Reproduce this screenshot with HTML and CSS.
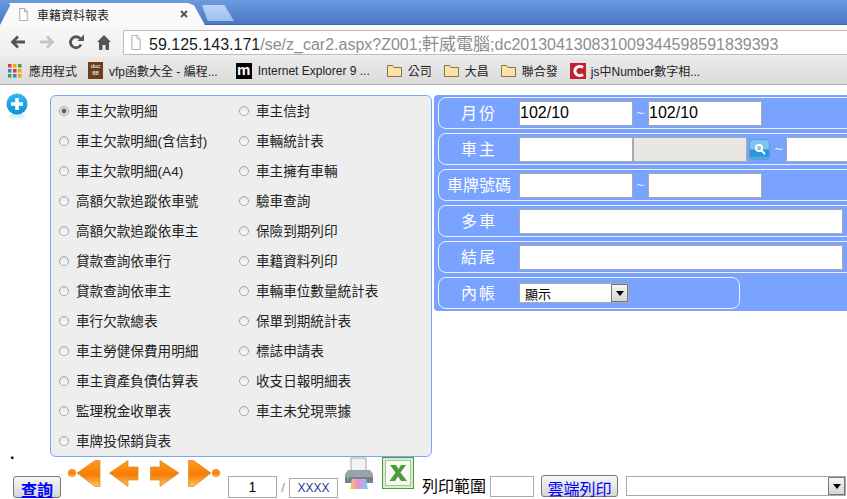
FILE: index.html
```html
<!doctype html>
<html lang="zh-Hant">
<head>
  <meta charset="utf-8" />
  <meta name="viewport" content="width=device-width,initial-scale=1" />
  <title>車籍資料報表</title>
  <link rel="stylesheet" href="styles.css">
</head>
<body>
  <!-- Browser frame -->
  <div class="tabStrip">
    <div class="tab">
      <svg class="favPage" width="9" height="13" viewBox="0 0 12 14" preserveAspectRatio="none"><path d="M1 .5h6.500L11 4v9.500H1z" fill="#fff" stroke="#999"/><path d="M7.500.5V4H11" fill="#eee" stroke="#999"/></svg>
      <span class="tabTitle">車籍資料報表</span>
      <svg class="tabClose" width="8" height="8" viewBox="0 0 8 8"><path d="M1 1l6 6M7 1L1 7" stroke="#555" stroke-width="2"/></svg>
    </div>
    <div class="newTab"></div>
  </div>

  <div class="toolbar">
    <svg class="navIcon" width="16" height="14" viewBox="0 0 16 14"><path d="M15 7H4M8 1.500L2.500 7 8 12.500" fill="none" stroke="#555" stroke-width="2.800"/></svg>
    <svg class="navIcon" width="16" height="14" viewBox="0 0 16 14"><path d="M1 7h11M8 1.500L13.500 7 8 12.500" fill="none" stroke="#c4c4c4" stroke-width="2.800"/></svg>
    <svg class="navIcon" width="16" height="16" viewBox="0 0 16 16"><path d="M13 10.500A5.500 5.500 0 1 1 12 4.500" fill="none" stroke="#555" stroke-width="2.800"/><path d="M9.500 7H16V0.500z" fill="#555"/></svg>
    <svg class="navIcon" width="14" height="15" viewBox="0 0 14 15"><path d="M7 0L0 7h2v8h3.500v-5h3v5H12V7h2z" fill="#555"/></svg>
    <div class="addressBar">
      <svg width="10" height="15" viewBox="0 0 12 15" preserveAspectRatio="none"><path d="M1 .5h6.500L11 4v10.500H1z" fill="#fff" stroke="#aaa"/><path d="M7.500.5V4H11" fill="#eee" stroke="#aaa"/></svg>
      <span class="url"><b>59.125.143.171</b>/se/z_car2.aspx?Z001;<span class="urlCjk">軒威電腦</span>;dc201304130831009344598591839393</span>
    </div>
  </div>

  <div class="bookmarks">
    <a class="mark markApps">
      <svg width="14" height="14" viewBox="0 0 14 14">
        <rect width="3.500" height="3.500" fill="#e33"/><rect x="5" width="3.500" height="3.500" fill="#f5a300"/><rect x="10" width="3.500" height="3.500" fill="#3a3"/>
        <rect y="5" width="3.500" height="3.500" fill="#38d"/><rect x="5" y="5" width="3.500" height="3.500" fill="#e33"/><rect x="10" y="5" width="3.500" height="3.500" fill="#f5a300"/>
        <rect y="10" width="3.500" height="3.500" fill="#3a3"/><rect x="5" y="10" width="3.500" height="3.500" fill="#38d"/><rect x="10" y="10" width="3.500" height="3.500" fill="#f5a300"/>
      </svg>應用程式</a>
    <a class="mark markDoc"><span class="docIcon">doc<br>88</span>vfp函數大全 - 編程...</a>
    <a class="mark markIe"><span class="mIcon">m</span>Internet Explorer 9 ...</a>
    <a class="mark"><svg class="folder" width="15" height="13" viewBox="0 0 15 13"><path d="M.5 12.500V1.500h5l1.500 2h7.500v9z" fill="#fbe3a8" stroke="#8a7443"/></svg>公司</a>
    <a class="mark"><svg class="folder" width="15" height="13" viewBox="0 0 15 13"><path d="M.5 12.500V1.500h5l1.500 2h7.500v9z" fill="#fbe3a8" stroke="#8a7443"/></svg>大昌</a>
    <a class="mark"><svg class="folder" width="15" height="13" viewBox="0 0 15 13"><path d="M.5 12.500V1.500h5l1.500 2h7.500v9z" fill="#fbe3a8" stroke="#8a7443"/></svg>聯合發</a>
    <a class="mark markC"><svg width="16" height="16" viewBox="0 0 16 16"><rect width="16" height="16" fill="#c4202e"/><path d="M13 4.500A5 4.500 0 1 0 13 11.500" fill="none" stroke="#fff" stroke-width="3"/></svg>js中Number數字相...</a>
  </div>

  <!-- Page -->
  <div class="page">
    <svg class="plusIcon" width="22" height="30" viewBox="0 0 22 30">
      <defs>
        <linearGradient id="plusBg" x1="0" y1="0" x2="0" y2="1"><stop offset="0" stop-color="#35b8ee"/><stop offset="1" stop-color="#0a8fd8"/></linearGradient>
        <linearGradient id="plusFade" x1="0" y1="0" x2="0" y2="1"><stop offset="0" stop-color="#bfe6f8"/><stop offset="1" stop-color="#fff"/></linearGradient>
      </defs>
      <ellipse cx="11" cy="24" rx="8" ry="4" fill="url(#plusFade)"/>
      <circle cx="11" cy="11" r="10.500" fill="url(#plusBg)"/>
      <path d="M11 5v12M5 11h12" stroke="#fff" stroke-width="3.600"/>
    </svg>

    <form class="reportList">
      <label class="opt"><input type="radio" name="rpt" checked>車主欠款明細</label>
      <label class="opt"><input type="radio" name="rpt">車主欠款明細(含信封)</label>
      <label class="opt"><input type="radio" name="rpt">車主欠款明細(A4)</label>
      <label class="opt"><input type="radio" name="rpt">高額欠款追蹤依車號</label>
      <label class="opt"><input type="radio" name="rpt">高額欠款追蹤依車主</label>
      <label class="opt"><input type="radio" name="rpt">貸款查詢依車行</label>
      <label class="opt"><input type="radio" name="rpt">貸款查詢依車主</label>
      <label class="opt"><input type="radio" name="rpt">車行欠款總表</label>
      <label class="opt"><input type="radio" name="rpt">車主勞健保費用明細</label>
      <label class="opt"><input type="radio" name="rpt">車主資產負債估算表</label>
      <label class="opt"><input type="radio" name="rpt">監理稅金收單表</label>
      <label class="opt"><input type="radio" name="rpt">車牌投保銷貨表</label>
      <label class="opt"><input type="radio" name="rpt">車主信封</label>
      <label class="opt"><input type="radio" name="rpt">車輛統計表</label>
      <label class="opt"><input type="radio" name="rpt">車主擁有車輛</label>
      <label class="opt"><input type="radio" name="rpt">驗車查詢</label>
      <label class="opt"><input type="radio" name="rpt">保險到期列印</label>
      <label class="opt"><input type="radio" name="rpt">車籍資料列印</label>
      <label class="opt"><input type="radio" name="rpt">車輛車位數量統計表</label>
      <label class="opt"><input type="radio" name="rpt">保單到期統計表</label>
      <label class="opt"><input type="radio" name="rpt">標誌申請表</label>
      <label class="opt"><input type="radio" name="rpt">收支日報明細表</label>
      <label class="opt"><input type="radio" name="rpt">車主未兌現票據</label>
    </form>

    <div class="filters">
      <div class="row">
        <span class="rowLabel">月份</span>
        <input class="field" value="102/10"><span class="tilde">~</span><input class="field" value="102/10">
      </div>
      <div class="row">
        <span class="rowLabel">車主</span>
        <input class="field"><input class="field fieldOff" disabled>
        <span class="searchBtn">
          <svg width="12" height="12" viewBox="0 0 12 12"><circle cx="5" cy="5" r="3" fill="none" stroke="#fff" stroke-width="2"/><path d="M7.500 7.500L11 11" stroke="#fff" stroke-width="2"/></svg>
        </span>
        <span class="tilde tildeOwner">~</span><input class="field">
      </div>
      <div class="row">
        <span class="rowLabel rowLabelTight">車牌號碼</span>
        <input class="field"><span class="tilde">~</span><input class="field">
      </div>
      <div class="row">
        <span class="rowLabel">多車</span>
        <input class="field fieldWide">
      </div>
      <div class="row">
        <span class="rowLabel">結尾</span>
        <input class="field fieldWide">
      </div>
      <div class="row rowShort">
        <span class="rowLabel">內帳</span>
        <div class="fakeSelect fakeSelectSmall"><span>顯示</span><i class="selectArrow"></i></div>
      </div>
    </div>
  </div>

  <!-- Bottom bar -->
  <div class="footer">
    <span class="dot">.</span>
    <button class="queryBtn" type="button">查詢</button>

    <svg class="arrow arrowFirst" width="33" height="28" viewBox="0 0 33 28">
      <defs><linearGradient id="org" x1="0" y1="0" x2="0" y2="1"><stop offset="0" stop-color="#ff9a1e"/><stop offset=".55" stop-color="#f77c06"/><stop offset="1" stop-color="#ffc061"/></linearGradient></defs>
      <circle cx="4" cy="13" r="3.800" fill="url(#org)" stroke="#d98a2a" stroke-width=".6"/>
      <path d="M9 13L27 .5h5v26h-5z" fill="url(#org)" stroke="#d9932f" stroke-width=".8"/>
    </svg>
    <svg class="arrow" width="30" height="28" viewBox="0 0 30 28">
      <path d="M.5 13L19 .5V7h10v13H19v6.500z" fill="url(#org)" stroke="#d9932f" stroke-width=".8"/>
    </svg>
    <svg class="arrow arrowThird" width="30" height="28" viewBox="0 0 30 28">
      <path d="M29 13L10 .5V7H.5v13H10v6.500z" fill="url(#org)" stroke="#d9932f" stroke-width=".8"/>
    </svg>
    <svg class="arrow" width="33" height="28" viewBox="0 0 33 28">
      <path d="M.5 .5h5L23 13 5.500 26.500h-5z" fill="url(#org)" stroke="#d9932f" stroke-width=".8"/>
      <circle cx="28" cy="13" r="3.800" fill="url(#org)" stroke="#d98a2a" stroke-width=".6"/>
    </svg>

    <input class="pageBox" value="1">
    <span class="slash">/</span>
    <span class="pageTotal">XXXX</span>

    <svg class="printer" width="30" height="33" viewBox="0 0 30 33">
      <defs><linearGradient id="rainbow" x1="0" y1="0" x2="1" y2="0"><stop offset="0" stop-color="#f4d34a"/><stop offset=".4" stop-color="#f08fd0"/><stop offset="1" stop-color="#7fc8f0"/></linearGradient></defs>
      <rect x="7" y="1" width="15" height="14" fill="#f2f2f2" stroke="#aaa"/>
      <path d="M4 13h22l3 4v8H1v-8z" fill="#9aa3ab"/>
      <rect x="1" y="20" width="28" height="6" fill="#76808a"/>
      <rect x="3" y="20" width="2" height="2" fill="#6c6"/>
      <path d="M8 22h14l2 10H6z" fill="url(#rainbow)"/>
    </svg>
    <svg class="excel" width="32" height="32" viewBox="0 0 32 32">
      <rect x=".5" y=".5" width="31" height="31" fill="#dcecd3" stroke="#4b9c3c"/>
      <rect x="3.500" y="3.500" width="25" height="25" fill="#f6fbf3" stroke="#9ec98f"/>
      <path d="M8 8h6l2.500 4L19 8h5l-5.500 7.500L25 24h-6l-3-4.500L13 24H7.500l6-8.500z" fill="#4f9a3f"/>
    </svg>

    <span class="rangeLabel">列印範圍</span>
    <input class="rangeBox">
    <button class="cloudBtn" type="button">雲端列印</button>
    <div class="fakeSelect fakeSelectBig"><span></span><i class="selectArrow"></i></div>
  </div>
</body>
</html>
```

FILE: styles.css
```css
:root{
  --panel-blue: #7aa3ff;
  --field-line: #aaa;
  --cjk: "Liberation Sans", "Noto Sans CJK TC", sans-serif;
}

*{ box-sizing:border-box }
html, body{ height:100%; }
body{
  margin:0;
  width:847px;
  height:499px;
  overflow:hidden;
  background:#fff;
  font-family:var(--cjk);
  color:#000;
}

/* Browser frame */
.tabStrip{
  height:25px;
  padding-top:3px;
  display:flex;
  align-items:flex-end;
  background:linear-gradient(#6b9ae0, #4a78c4);
  border-bottom:1px solid #3f66a8;
}
.tab{
  width:205px;
  height:22px;
  margin-bottom:-1px;
  padding-left:19px;
  display:flex;
  align-items:center;
  background:#fafafa;
  clip-path:polygon(0 100%, 5% 10%, 9px 0, 188px 0, 194px 10%, 100% 100%);
}
.tabTitle{
  margin-left:9px;
  font-size:12px;
  color:#222;
}
.tabClose{ margin-left:auto; margin-right:17px; }
.newTab{
  width:32px;
  height:16px;
  margin:0 0 3px -3px;
  background:linear-gradient(#b9d3f5, #9cc0ee);
  clip-path:polygon(0 0, 70% 0, 100% 100%, 18% 100%);
}

.toolbar{
  height:32px;
  padding:4px 0 2px 10px;
  display:flex;
  align-items:center;
  background:linear-gradient(#f8f8f8, #eee);
}
.navIcon{ margin-right:13px; flex:none; }
.navIcon:nth-child(4){ margin-right:12px; }
.addressBar{
  flex:1;
  height:25px;
  padding-left:7px;
  display:flex;
  align-items:center;
  gap:8px;
  background:#fff;
  border:1px solid #bcbcbc;
  border-right:0;
  border-radius:2px 0 0 2px;
  white-space:nowrap;
}
.url{
  font-size:16px;
  color:#8d8d8d;
}
.url b{ font-weight:400; color:#1a1a1a; }
.urlCjk{ font-size:17px; }

.bookmarks{
  height:28px;
  padding-left:8px;
  display:flex;
  align-items:center;
  background:linear-gradient(#e9e9e9, #dcdcdc);
  border-bottom:1px solid #b5b5b5;
  font-size:12px;
  white-space:nowrap;
  color:#222;
}
.mark{
  display:flex;
  align-items:center;
  gap:6px;
  margin-right:12px;
}
.markApps{ margin-right:11px; gap:7px; }
.markDoc{ margin-right:18px; }
.markIe{ margin-right:17px; }
.markC{ gap:5px; }
.docIcon{
  width:15px;
  height:17px;
  padding-top:1px;
  background:#6b3f1d;
  color:#fff;
  font-size:6px;
  line-height:7px;
  text-align:center;
}
.mIcon{
  width:16px;
  height:16px;
  background:#000;
  color:#fff;
  font-weight:700;
  font-size:15px;
  line-height:14px;
  text-align:center;
}

/* Page */
.page{
  height:372px;
  padding:8px 0 0 6px;
  display:flex;
  align-items:flex-start;
}
.plusIcon{ flex:none; margin-right:22px; }

.reportList{
  flex:none;
  width:382px;
  height:362px;
  margin:2px 2px 0 0;
  padding-left:8px;
  display:grid;
  grid-auto-flow:column;
  grid-template-rows:repeat(12, 30px);
  grid-template-columns:180px 1fr;
  background:#eee;
  border:1px solid var(--panel-blue);
  border-radius:6px;
}
.opt{
  display:flex;
  align-items:center;
  padding-bottom:2px;
  font-size:13.600px;
  white-space:nowrap;
  color:#222;
}
.opt input{
  appearance:none;
  width:10px;
  height:10px;
  margin:2px 7px 0 0;
  border:1px solid #a5a5a5;
  border-radius:50%;
  background:linear-gradient(#e4e4e4, #fff);
}
.opt input:checked{
  background:radial-gradient(circle, #666 0 2px, #eee 3px);
}

.filters{
  flex:1;
  min-width:0;
  height:216px;
  margin-top:2px;
  padding:2px 0 0 4px;
  display:flex;
  flex-direction:column;
  gap:4px;
  overflow:hidden;
  background:var(--panel-blue);
  border-radius:4px 0 0 4px;
}
.row{
  flex:none;
  width:430px;
  height:32px;
  display:flex;
  align-items:center;
  border:1px solid #e8efff;
  border-radius:8px;
}
.rowShort{ width:302px; }
.rowLabel{
  flex:none;
  width:80px;
  padding-bottom:2px;
  font-size:16px;
  letter-spacing:2px;
  text-align:center;
  color:#fff;
}
.rowLabelTight{ letter-spacing:0; }
.field{
  flex:none;
  width:114px;
  height:25px;
  padding:0;
  border:1px solid var(--field-line);
  background:#fff;
  font:16px var(--cjk);
  color:#000;
  outline:0;
}
.fieldOff{ background:#e9e7e1; }
.fieldWide{ width:324px; }
.tilde{
  flex:none;
  width:15px;
  font-size:14px;
  text-align:center;
  color:#e6edff;
}
.tildeOwner{ margin-left:1px; }
.searchBtn{
  flex:none;
  width:21px;
  height:21px;
  margin-left:2px;
  display:grid;
  place-items:center;
  border-radius:4px;
  background:linear-gradient(#7ec3ee 0 45%, #2c95d8 55% 80%, #5aaee4);
  border:1px solid #5b9bd0;
}

.fakeSelect{
  flex:none;
  display:flex;
  align-items:stretch;
  justify-content:space-between;
  background:#fff;
  border:1px solid var(--field-line);
  font-size:13px;
}
.fakeSelect span{ padding-left:5px; align-self:center; }
.fakeSelectSmall{ width:110px; height:20px; }
.fakeSelectBig{ width:220px; height:20px; margin:0 0 2px 8px; }
.selectArrow{
  width:17px;
  position:relative;
  background:linear-gradient(#f6f6f6, #d5d5d5);
  border:1px solid #777;
}
.selectArrow::after{
  content:"";
  position:absolute;
  left:4px;
  top:6px;
  border:4px solid transparent;
  border-top:5px solid #000;
  border-bottom:0;
}

/* Bottom bar */
.footer{
  height:42px;
  padding:0 0 1px 10px;
  display:flex;
  align-items:flex-end;
}
.dot{
  width:3px;
  align-self:flex-start;
  margin-top:-12px;
  font-size:16px;
  font-weight:700;
}
.queryBtn, .cloudBtn{
  flex:none;
  height:22px;
  padding:0;
  border:1px solid #777;
  border-radius:3px;
  background:linear-gradient(#f7f7f7, #d6d6d6);
  color:#00f;
  font-family:var(--cjk);
}
.queryBtn{
  width:48px;
  font-size:16px;
  font-weight:700;
  text-decoration:underline;
}
.cloudBtn{
  width:77px;
  margin:0 0 1px 7px;
  font-size:16px;
}
.arrow{
  flex:none;
  align-self:flex-start;
  margin-top:3px;
  margin-left:8px;
}
.arrowFirst{ margin-left:7px; }
.arrowThird{ margin-left:11px; }
.pageBox, .pageTotal, .rangeBox{
  flex:none;
  border:1px solid var(--field-line);
  background:#fff;
}
.pageBox{
  width:49px;
  height:22px;
  margin-left:7px;
  padding:0;
  text-align:center;
  font:14px var(--cjk);
  color:#000;
}
.slash{
  width:12px;
  text-align:center;
  font-size:13px;
  line-height:21px;
  color:#7a93c4;
}
.pageTotal{
  width:49px;
  height:20px;
  text-align:center;
  font-size:12px;
  line-height:18px;
  color:#223a9c;
}
.printer{
  flex:none;
  align-self:flex-start;
  margin-left:6px;
}
.excel{
  flex:none;
  align-self:flex-start;
  margin-left:8px;
}
.rangeLabel{
  margin-left:8px;
  font-size:16px;
  line-height:22px;
  white-space:nowrap;
}
.rangeBox{
  width:44px;
  height:21px;
  margin:0 0 1px 4px;
}
```
